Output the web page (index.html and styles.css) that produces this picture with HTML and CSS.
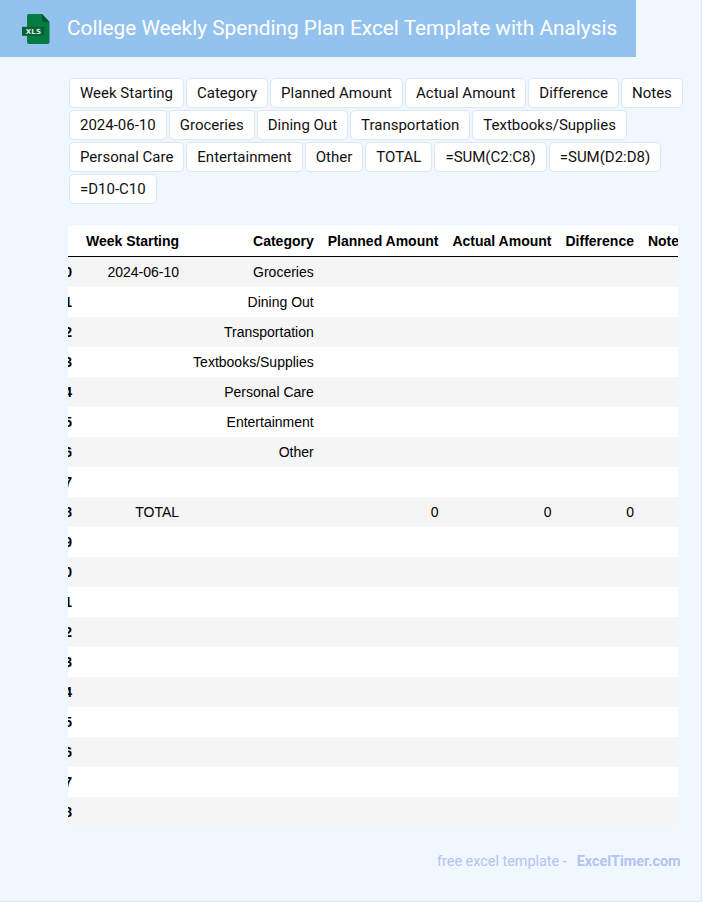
FILE: index.html
```html
<!DOCTYPE html>
<html lang="en">
<head>
<meta charset="utf-8">
<title>College Weekly Spending Plan Excel Template with Analysis</title>
<link rel="stylesheet" href="styles.css">
</head>
<body>
<div class="page">
  <header class="banner">
    <svg class="logo" width="28" height="30" viewBox="0 0 28 30" aria-hidden="true">
      <path d="M7 0H20L27.5 8V28a2 2 0 0 1-2 2H7a2 2 0 0 1-2-2V2a2 2 0 0 1 2-2Z" fill="#037b41"/>
      <path d="M20 0L27.5 8H22a2 2 0 0 1-2-2Z" fill="#02552d"/>
      <rect x="0" y="12.8" width="22.3" height="9" fill="#0a5f36"/>
      <text x="11.5" y="20.4" class="logo-text" text-anchor="middle">XLS</text>
    </svg>
    <h1 class="title">College Weekly Spending Plan Excel Template with Analysis</h1>
  </header>
  <section class="chips">
    <span class="chip">Week Starting</span>
    <span class="chip">Category</span>
    <span class="chip">Planned Amount</span>
    <span class="chip">Actual Amount</span>
    <span class="chip">Difference</span>
    <span class="chip">Notes</span>
    <span class="chip">2024-06-10</span>
    <span class="chip">Groceries</span>
    <span class="chip">Dining Out</span>
    <span class="chip">Transportation</span>
    <span class="chip">Textbooks/Supplies</span>
    <span class="chip">Personal Care</span>
    <span class="chip">Entertainment</span>
    <span class="chip">Other</span>
    <span class="chip">TOTAL</span>
    <span class="chip">=SUM(C2:C8)</span>
    <span class="chip">=SUM(D2:D8)</span>
    <span class="chip">=D10-C10</span>
  </section>
  <section class="table-clip">
    <table class="sheet">
      <thead>
        <tr><th></th><th>Week Starting</th><th>Category</th><th>Planned Amount</th><th>Actual Amount</th><th>Difference</th><th>Notes</th></tr>
      </thead>
      <tbody>
        <tr><th>0</th><td>2024-06-10</td><td>Groceries</td><td></td><td></td><td></td><td></td></tr>
        <tr><th>1</th><td></td><td>Dining Out</td><td></td><td></td><td></td><td></td></tr>
        <tr><th>2</th><td></td><td>Transportation</td><td></td><td></td><td></td><td></td></tr>
        <tr><th>3</th><td></td><td>Textbooks/Supplies</td><td></td><td></td><td></td><td></td></tr>
        <tr><th>4</th><td></td><td>Personal Care</td><td></td><td></td><td></td><td></td></tr>
        <tr><th>5</th><td></td><td>Entertainment</td><td></td><td></td><td></td><td></td></tr>
        <tr><th>6</th><td></td><td>Other</td><td></td><td></td><td></td><td></td></tr>
        <tr><th>7</th><td></td><td></td><td></td><td></td><td></td><td></td></tr>
        <tr><th>8</th><td>TOTAL</td><td></td><td>0</td><td>0</td><td>0</td><td></td></tr>
        <tr><th>9</th><td></td><td></td><td></td><td></td><td></td><td></td></tr>
        <tr><th>10</th><td></td><td></td><td></td><td></td><td></td><td></td></tr>
        <tr><th>11</th><td></td><td></td><td></td><td></td><td></td><td></td></tr>
        <tr><th>12</th><td></td><td></td><td></td><td></td><td></td><td></td></tr>
        <tr><th>13</th><td></td><td></td><td></td><td></td><td></td><td></td></tr>
        <tr><th>14</th><td></td><td></td><td></td><td></td><td></td><td></td></tr>
        <tr><th>15</th><td></td><td></td><td></td><td></td><td></td><td></td></tr>
        <tr><th>16</th><td></td><td></td><td></td><td></td><td></td><td></td></tr>
        <tr><th>17</th><td></td><td></td><td></td><td></td><td></td><td></td></tr>
        <tr><th>18</th><td></td><td></td><td></td><td></td><td></td><td></td></tr>
      </tbody>
    </table>
  </section>
  <footer class="foot">
    <span class="foot-note">free excel template -</span>
    <a class="foot-link">ExcelTimer.com</a>
  </footer>
</div>
</body>
</html>
```
FILE: styles.css
```css
* { box-sizing: border-box; }
html, body { margin: 0; padding: 0; }
body { background: #f0f7ff; font-family: Roboto, sans-serif; }
.page {
  width: 702px;
  height: 902px;
  border: 1px solid #dbe5f1;
  border-width: 0 1px 1px 0;
  overflow: hidden;
}
.banner {
  width: 636px;
  height: 57px;
  background: #94c2ee;
  display: flex;
  align-items: center;
  padding-left: 22px;
}
.logo { flex: none; margin-top: 1px; }
.logo-text { font: 700 7px "DejaVu Sans", sans-serif; fill: #dfeee5; letter-spacing: 0.2px; }
.title {
  margin: 0 0 2px 17px;
  font-family: Roboto, sans-serif;
  font-weight: 400;
  font-size: 20.8px;
  color: #fff;
  white-space: nowrap;
}
.chips {
  margin: 21px 0 0 69px;
  width: 625px;
  display: flex;
  flex-wrap: wrap;
  gap: 2px;
}
.chip {
  height: 30px;
  padding: 0 10px;
  line-height: 28px;
  font-size: 15px;
  color: #111;
  background: #fff;
  border: 1px solid #dce7f5;
  border-radius: 5px;
  white-space: nowrap;
}
.table-clip {
  margin: 22px 0 0 68px;
  width: 610px;
  height: 601px;
  overflow: hidden;
  background: #fff;
}
.sheet {
  margin-left: -18.6px;
  border-collapse: separate;
  border-spacing: 0;
  font-family: "Liberation Sans", Arial, sans-serif;
  font-size: 14px;
  color: #000;
}
.sheet th, .sheet td {
  height: 30px;
  padding: 0 7px;
  text-align: right;
  white-space: nowrap;
}
.sheet thead th { height: 31px; padding-bottom: 1px; border-bottom: 1px solid #000; }
.sheet tbody tr:nth-child(odd) { background: #f5f5f5; }
.foot {
  margin: 25px 20.5px 0 0;
  display: flex;
  justify-content: flex-end;
  gap: 10px;
  font-size: 14.4px;
  line-height: 20px;
  color: #b2c4f0;
}
.foot-link { font-weight: 700; }
```
